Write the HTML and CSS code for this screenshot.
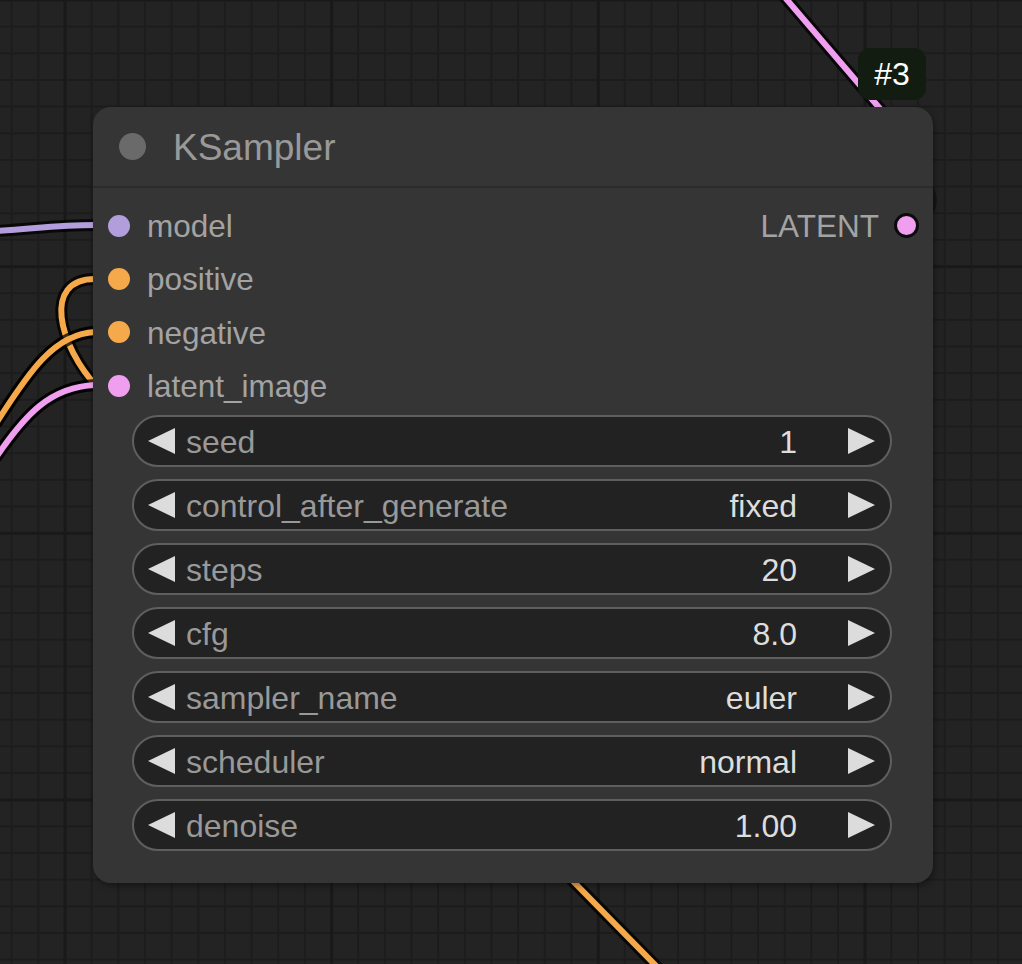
FILE: index.html
```html
<!DOCTYPE html>
<html>
<head>
<meta charset="utf-8">
<title>KSampler</title>
<link rel="stylesheet" href="styles.css">
</head>
<body>
<div class="canvas">
  <svg class="wires" width="1022" height="964" viewBox="0 0 1022 964">
    <path class="shadow-arc" d="M 907 223 C 942 221, 941 180, 905 172"/>
    <g class="outline">
      <path d="M 782 -6 L 888 118"/>
      <path d="M 566 874 L 664 974"/>
      <path d="M -5 231 C 40 228, 60 225, 95 225"/>
      <path d="M 95 279 C 42 279, 58 345, 98 388"/>
      <path d="M -3 422 C 30 370, 55 334, 95 332"/>
      <path d="M -3 456 C 25 415, 50 387, 95 385"/>
    </g>
    <path class="w pink" d="M 782 -6 L 888 118"/>
    <path class="w orange" d="M 566 874 L 664 974"/>
    <path class="w lav" d="M -5 231 C 40 228, 60 225, 95 225"/>
    <path class="w orange" d="M 95 279 C 42 279, 58 345, 98 388"/>
    <path class="outline-cross" d="M -3 422 C 30 370, 55 334, 95 332"/>
    <path class="w orange" d="M -3 422 C 30 370, 55 334, 95 332"/>
    <path class="outline-cross" d="M -3 456 C 25 415, 50 387, 95 385"/>
    <path class="w pink" d="M -3 456 C 25 415, 50 387, 95 385"/>
  </svg>

  <div class="badge">#3</div>

  <div class="node">
    <div class="title">
      <span class="title-dot"></span>
      <span class="title-text">KSampler</span>
    </div>
    <div class="body">
      <div class="slots">
        <div class="slot-row">
          <div class="slot in"><span class="dot lav"></span><span class="slot-label">model</span></div>
          <div class="slot out"><span class="slot-label">LATENT</span><span class="dot pink ring"></span></div>
        </div>
        <div class="slot-row">
          <div class="slot in"><span class="dot orange"></span><span class="slot-label">positive</span></div>
        </div>
        <div class="slot-row">
          <div class="slot in"><span class="dot orange"></span><span class="slot-label">negative</span></div>
        </div>
        <div class="slot-row">
          <div class="slot in"><span class="dot pink"></span><span class="slot-label">latent_image</span></div>
        </div>
      </div>
      <div class="widgets">
        <div class="widget">
          <svg class="arrow" viewBox="0 0 27 26"><polygon points="27,0 27,26 0,13"/></svg>
          <span class="w-label">seed</span><span class="w-value">1</span>
          <svg class="arrow" viewBox="0 0 27 26"><polygon points="0,0 0,26 27,13"/></svg>
        </div>
        <div class="widget">
          <svg class="arrow" viewBox="0 0 27 26"><polygon points="27,0 27,26 0,13"/></svg>
          <span class="w-label">control_after_generate</span><span class="w-value">fixed</span>
          <svg class="arrow" viewBox="0 0 27 26"><polygon points="0,0 0,26 27,13"/></svg>
        </div>
        <div class="widget">
          <svg class="arrow" viewBox="0 0 27 26"><polygon points="27,0 27,26 0,13"/></svg>
          <span class="w-label">steps</span><span class="w-value">20</span>
          <svg class="arrow" viewBox="0 0 27 26"><polygon points="0,0 0,26 27,13"/></svg>
        </div>
        <div class="widget">
          <svg class="arrow" viewBox="0 0 27 26"><polygon points="27,0 27,26 0,13"/></svg>
          <span class="w-label">cfg</span><span class="w-value">8.0</span>
          <svg class="arrow" viewBox="0 0 27 26"><polygon points="0,0 0,26 27,13"/></svg>
        </div>
        <div class="widget">
          <svg class="arrow" viewBox="0 0 27 26"><polygon points="27,0 27,26 0,13"/></svg>
          <span class="w-label">sampler_name</span><span class="w-value">euler</span>
          <svg class="arrow" viewBox="0 0 27 26"><polygon points="0,0 0,26 27,13"/></svg>
        </div>
        <div class="widget">
          <svg class="arrow" viewBox="0 0 27 26"><polygon points="27,0 27,26 0,13"/></svg>
          <span class="w-label">scheduler</span><span class="w-value">normal</span>
          <svg class="arrow" viewBox="0 0 27 26"><polygon points="0,0 0,26 27,13"/></svg>
        </div>
        <div class="widget">
          <svg class="arrow" viewBox="0 0 27 26"><polygon points="27,0 27,26 0,13"/></svg>
          <span class="w-label">denoise</span><span class="w-value">1.00</span>
          <svg class="arrow" viewBox="0 0 27 26"><polygon points="0,0 0,26 27,13"/></svg>
        </div>
      </div>
    </div>
  </div>
</div>
</body>
</html>
```

FILE: styles.css
```css
* { box-sizing: border-box; }

html, body {
  margin: 0;
  padding: 0;
  background: #222222;
}

.canvas {
  position: relative;
  width: 1022px;
  height: 964px;
  overflow: hidden;
  font-family: "Liberation Sans", Arial, sans-serif;
  background-color: #232323;
  background-image:
    linear-gradient(to right, #191919 3px, transparent 3px),
    linear-gradient(to bottom, #191919 3px, transparent 3px),
    linear-gradient(to right, #1c1c1c 2px, transparent 2px),
    linear-gradient(to bottom, #1c1c1c 2px, transparent 2px);
  background-size:
    266.667px 100%,
    100% 266.667px,
    26.6667px 100%,
    100% 26.6667px;
  background-position:
    63.5px 0,
    0 -1.5px,
    10.67px 0,
    0 -1px;
}

.wires {
  position: absolute;
  left: 0;
  top: 0;
}

.wires path {
  fill: none;
  stroke-linecap: round;
}

.shadow-arc {
  stroke: #0c0c0c;
  stroke-opacity: 0.55;
  stroke-width: 8;
}

.outline path,
.outline-cross {
  stroke: #000;
  stroke-opacity: 0.75;
  stroke-width: 12;
}

.w { stroke-width: 6; }
.w.pink { stroke: #f09ff0; }
.w.orange { stroke: #f5a94b; }
.w.lav { stroke: #b39edd; }

.badge {
  position: absolute;
  left: 858px;
  top: 48px;
  width: 68px;
  height: 52px;
  border-radius: 12px;
  background: #131c10;
  color: #ffffff;
  font-size: 32px;
  display: flex;
  align-items: center;
  justify-content: center;
}

.node {
  position: absolute;
  left: 93px;
  top: 107px;
  width: 840px;
  height: 776px;
  background: #353535;
  border-radius: 18px;
  box-shadow: 2px 3px 6px rgba(0, 0, 0, 0.35);
  display: flex;
  flex-direction: column;
}

.title {
  height: 81px;
  border-bottom: 2px solid #2b2b2b;
  display: flex;
  align-items: center;
  padding-left: 26px;
  gap: 27px;
}

.title-dot {
  width: 27px;
  height: 27px;
  border-radius: 50%;
  background: #6a6a6a;
}

.title-text {
  color: #999999;
  font-size: 37px;
  line-height: 1;
  position: relative;
  top: 1px;
}

.body {
  padding-top: 11px;
  display: flex;
  flex-direction: column;
}

.slots {
  display: flex;
  flex-direction: column;
}

.slot-row {
  height: 53.33px;
  display: flex;
  align-items: center;
  justify-content: space-between;
}

.slot {
  display: flex;
  align-items: center;
  font-size: 31.5px;
  color: #a3a3a3;
}

.slot.in { padding-left: 15px; gap: 17px; }
.slot.out { padding-right: 14px; gap: 15px; }

.slot-label { line-height: 1; position: relative; top: 1px; }

.dot {
  width: 22px;
  height: 22px;
  border-radius: 50%;
}

.dot.lav { background: #b39edd; }
.dot.orange { background: #f5a94b; }
.dot.pink { background: #f09ff0; }
.dot.ring {
  width: 25px;
  height: 25px;
  border: 3px solid #0b0b0b;
}

.widgets {
  display: flex;
  flex-direction: column;
  gap: 12px;
  padding: 3px 41px 0 39px;
}

.widget {
  height: 52px;
  border: 2px solid #5f5f5f;
  border-radius: 26px;
  background: #222222;
  display: flex;
  align-items: center;
  padding: 0 15px 0 14px;
  font-size: 32px;
}

.arrow {
  width: 27px;
  height: 26px;
  flex: none;
  fill: #dcdcdc;
}

.w-label {
  color: #999999;
  margin-left: 11px;
  flex: 1;
  line-height: 1;
  position: relative;
  top: 1px;
}

.w-value {
  color: #dddddd;
  margin-right: 51px;
  line-height: 1;
  position: relative;
  top: 1px;
}
```
